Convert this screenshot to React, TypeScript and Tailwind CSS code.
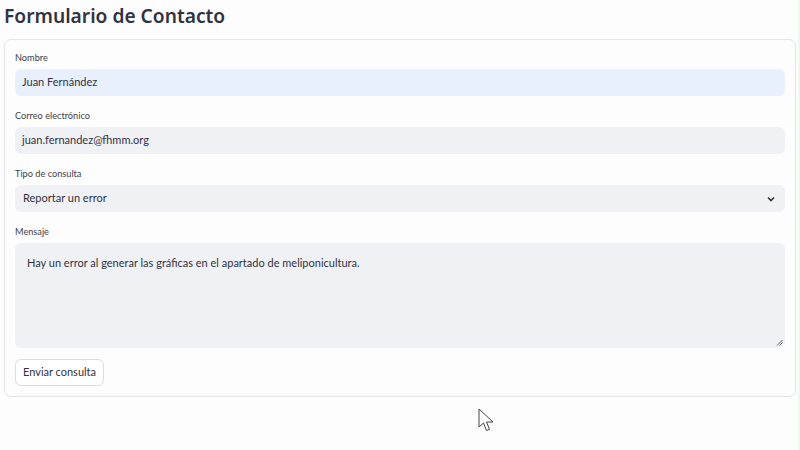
import React from "react";

export default function App() {
  const font = { fontFamily: '"Source Sans Pro", Lato, "Noto Sans", sans-serif' };
  const titleFont = { fontFamily: '"Source Sans Pro", "Noto Sans", sans-serif' };
  return (
    <div className="relative w-[800px] h-[450px] bg-[#fdfdfd] text-[#31333f] overflow-hidden" style={font}>
      <div className="px-[4px] pt-[3px]">
        <h1 className="text-[19.2px] leading-[26px] font-semibold" style={titleFont}>Formulario de Contacto</h1>
        <div className="mt-[10px] w-[792px] h-[358px] border border-[#e3e4e8] rounded-[7px] px-[10px] pt-[11px]">
          <div className="text-[9.2px] leading-[14px] text-[#3d3f4a]">Nombre</div>
          <div className="mt-[4px] h-[27px] rounded-[6px] bg-[#e8f0fe] flex items-center px-[7px] text-[11px]">Juan Fernández</div>
          <div className="mt-[13px] text-[9.2px] leading-[14px] text-[#3d3f4a]">Correo electrónico</div>
          <div className="mt-[4px] h-[27px] rounded-[6px] bg-[#f0f1f5] flex items-center px-[7px] text-[11px]">juan.fernandez@fhmm.org</div>
          <div className="mt-[13px] text-[9.2px] leading-[14px] text-[#3d3f4a]">Tipo de consulta</div>
          <div className="mt-[4px] h-[27px] rounded-[6px] bg-[#f0f1f5] flex items-center justify-between px-[8px] text-[11px]">
            <span>Reportar un error</span>
            <svg width="10" height="10" viewBox="0 0 10 10" className="mr-[1px]"><path d="M2 3.5 L5 6.5 L8 3.5" fill="none" stroke="#31333f" strokeWidth="1.6" /></svg>
          </div>
          <div className="mt-[13px] text-[9.2px] leading-[14px] text-[#3d3f4a]">Mensaje</div>
          <div className="relative mt-[4px] h-[105px] rounded-[6px] bg-[#f0f1f5] px-[12px] pt-[12px] text-[11px] leading-[16px]">
            Hay un error al generar las gráficas en el apartado de meliponicultura.
            <svg width="7" height="7" viewBox="0 0 7 7" className="absolute right-[2px] bottom-[2px]"><path d="M6.5 1 L1 6.5 M6.5 3.5 L3.5 6.5" stroke="#666" strokeWidth="1" /></svg>
          </div>
          <button className="mt-[11px] h-[27px] px-[7px] rounded-[6px] border border-[#dcdde2] bg-white text-[11px]">Enviar consulta</button>
        </div>
      </div>
      <div className="absolute top-0 right-0 w-[2px] h-full bg-[#eef8ee]" />
      <svg className="absolute left-[478px] top-[408px]" width="18" height="26" viewBox="0 0 18 26">
        <path d="M1 1 L1 19 L5.5 15 L8.5 22.5 L11.5 21.3 L8.5 14 L15 14 Z" fill="white" stroke="#444" strokeWidth="1" strokeLinejoin="round" />
      </svg>
    </div>
  );
}
